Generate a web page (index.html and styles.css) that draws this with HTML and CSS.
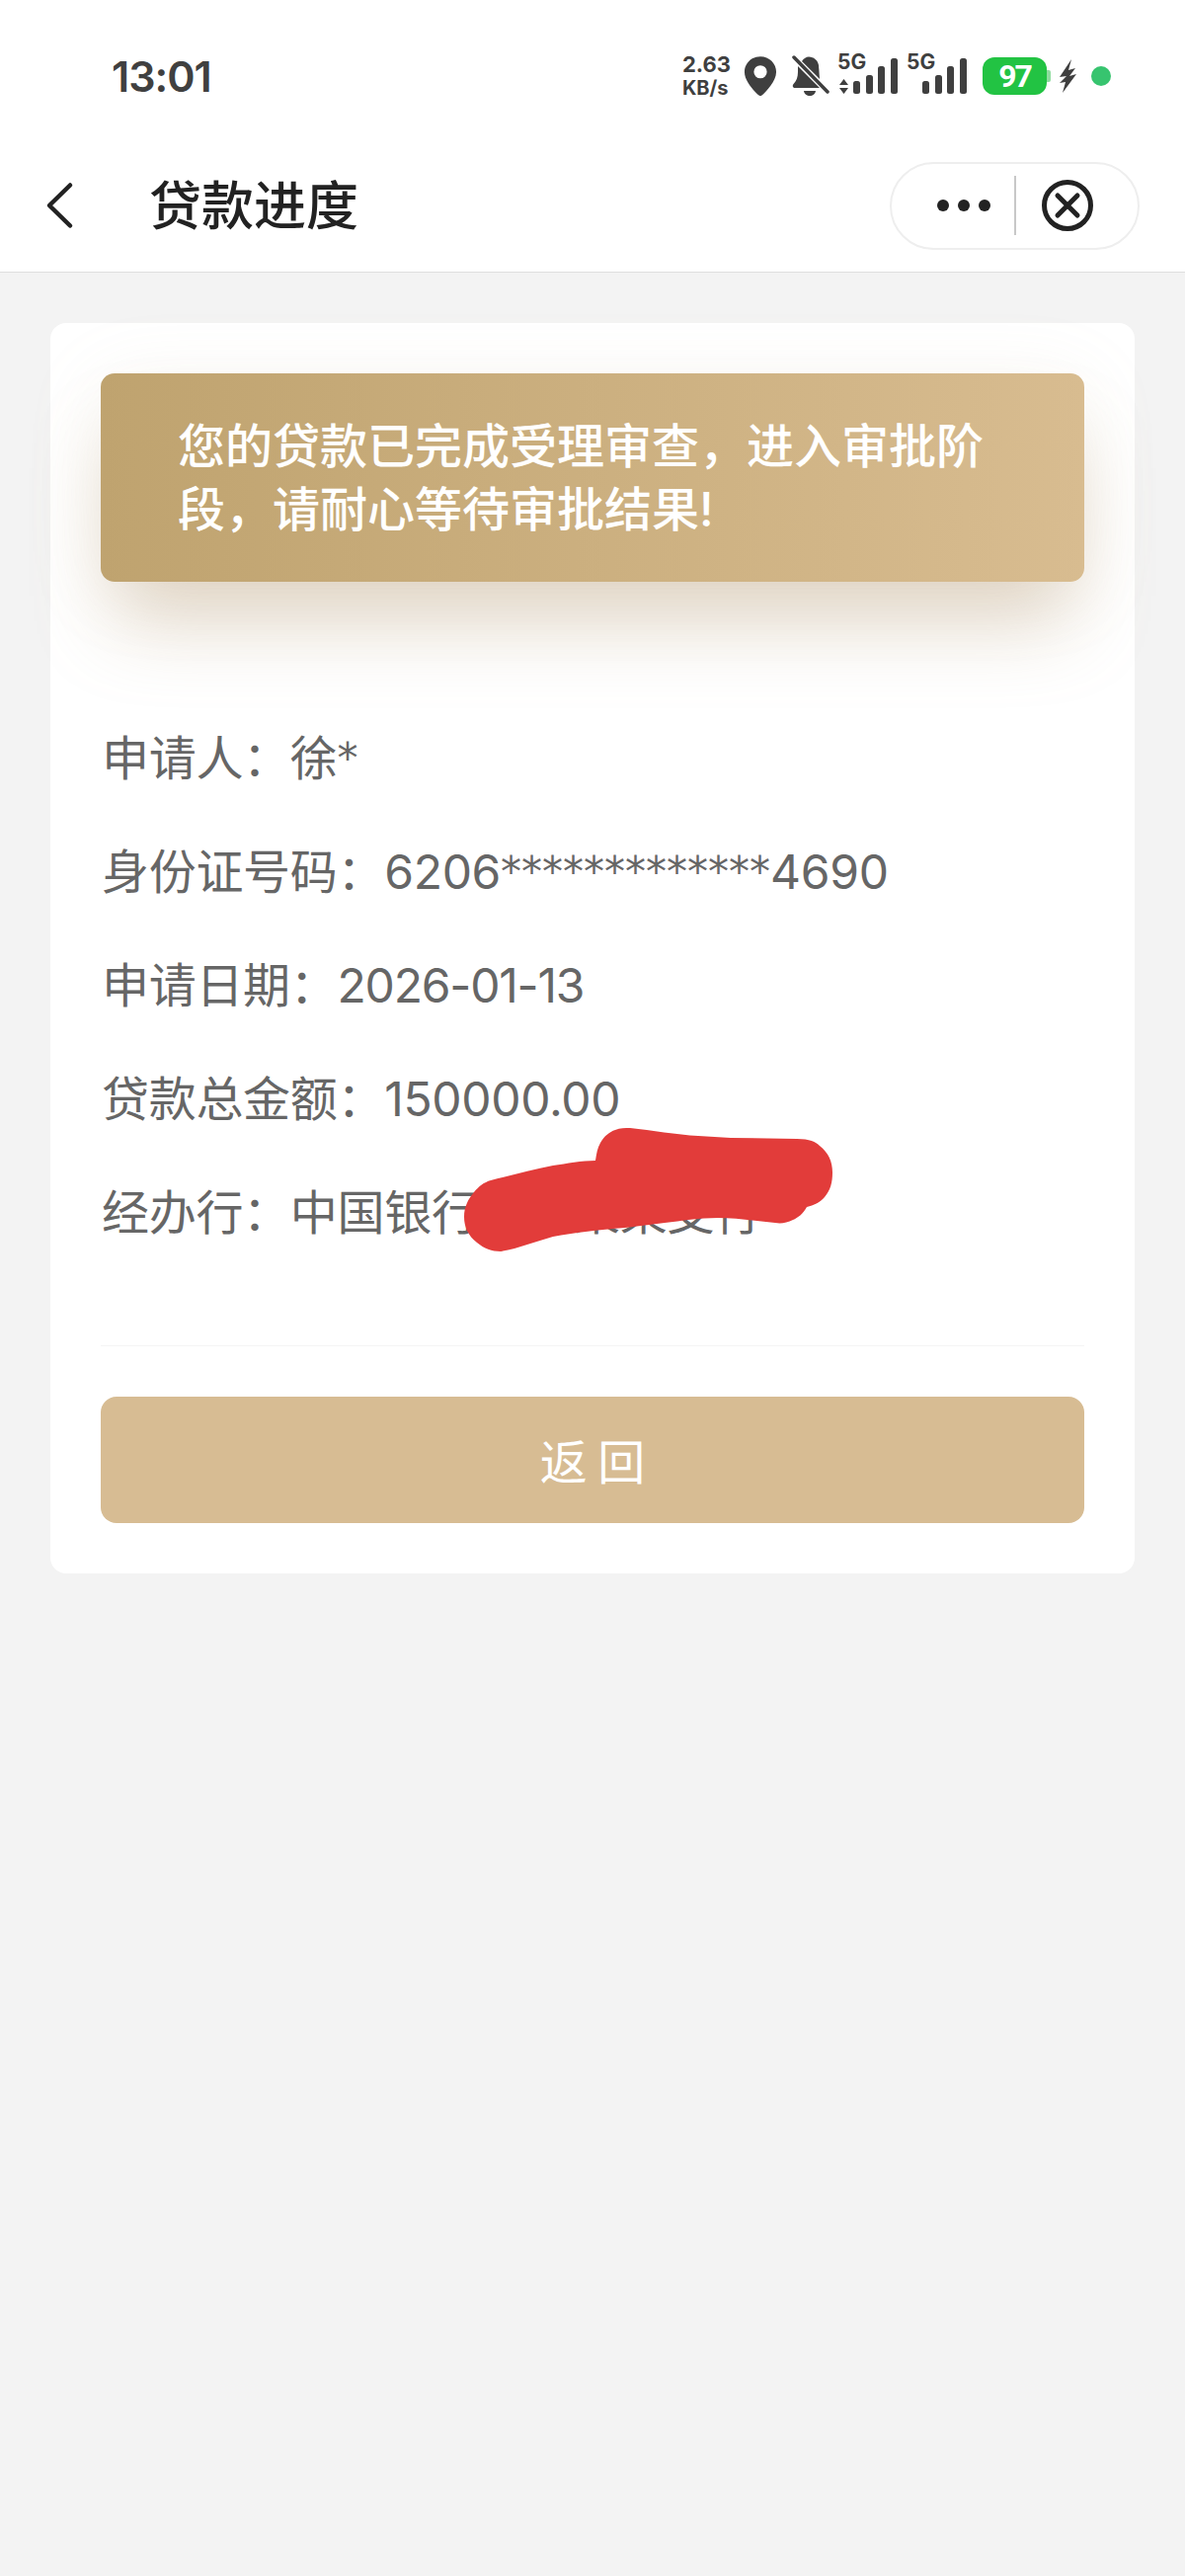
FILE: index.html
```html
<!DOCTYPE html>
<html lang="zh-CN">
<head>
    <meta charset="UTF-8">
    <meta name="viewport" content="width=device-width, initial-scale=1.0">
    <title>贷款进度</title>
    <link rel="stylesheet" href="styles.css">
</head>
<body>

<div class="status-bar">
    <span class="clock">13:01</span>
    <div class="status-icons">
        <div class="speed"><span class="speed-num">2.63</span><span>KB/s</span></div>
        <svg class="icon-pin" width="34" height="42" viewBox="0 0 36 44">
            <path fill-rule="evenodd" fill="#3f3f3f" d="M18 1C8.400 1 1 8.500 1 17.500C1 28 12 38.500 16 42.500C17.200 43.600 18.800 43.600 20 42.500C24 38.500 35 28 35 17.500C35 8.500 27.600 1 18 1ZM18 10.500A7 7 0 1 1 18 24.500A7 7 0 1 1 18 10.500Z"/>
        </svg>
        <svg class="icon-bell" width="38" height="41" viewBox="0 0 38 41">
            <path fill="#3f3f3f" d="M10 6C12 3 14.500 1.500 17 1.500C22 1.500 26 5 27 10L28 24Z"/>
            <path fill="#3f3f3f" d="M6 11L28 33H3C0.500 33 0 30.500 2 28.500C4.500 26 6 22 6 17Z"/>
            <path fill="#3f3f3f" d="M12 36H24C23.500 39.500 21 41 18 41C15 41 12.500 39.500 12 36Z"/>
            <path stroke="#3f3f3f" stroke-width="3.500" stroke-linecap="round" d="M2 2L36 37"/>
        </svg>
        <svg class="icon-signal" width="61" height="44" viewBox="0 0 61 44">
            <text x="0" y="19" class="net-label">5G</text>
            <path fill="#3f3f3f" d="M6.500 29L11 35H2ZM6.500 44L2 38H11Z"/>
            <rect x="16" y="31" width="7" height="13" rx="2.500" fill="#3f3f3f"/>
            <rect x="29" y="25" width="7" height="19" rx="2.500" fill="#3f3f3f"/>
            <rect x="41" y="16" width="7" height="28" rx="2.500" fill="#3f3f3f"/>
            <rect x="54" y="8" width="7" height="36" rx="2.500" fill="#3f3f3f"/>
        </svg>
        <svg class="icon-signal icon-signal-second" width="61" height="44" viewBox="0 0 61 44">
            <text x="0" y="19" class="net-label">5G</text>
            <rect x="16" y="31" width="7" height="13" rx="2.500" fill="#3f3f3f"/>
            <rect x="29" y="25" width="7" height="19" rx="2.500" fill="#3f3f3f"/>
            <rect x="41" y="16" width="7" height="28" rx="2.500" fill="#3f3f3f"/>
            <rect x="54" y="8" width="7" height="36" rx="2.500" fill="#3f3f3f"/>
        </svg>
        <div class="battery"><span class="battery-level">97</span><span class="battery-tip"></span></div>
        <svg class="icon-bolt" width="17" height="34" viewBox="0 0 17 34">
            <path fill="#3f3f3f" d="M12 0L0 18L7 17L0 24L6 23L3 34L17 15L10 17L16 9L9 11Z"/>
        </svg>
        <span class="dot"></span>
    </div>
</div>

<div class="nav-bar">
    <svg class="back" width="30" height="50" viewBox="0 0 30 50">
        <path d="M26 4.500L5 25L26 45.500" fill="none" stroke="#222" stroke-width="4.500" stroke-linecap="round" stroke-linejoin="round"/>
    </svg>
    <h1 class="nav-title">贷款进度</h1>
    <div class="capsule">
        <div class="capsule-dots"><span></span><span></span><span></span></div>
        <span class="capsule-line"></span>
        <svg width="54" height="54" viewBox="0 0 54 54">
            <circle cx="27" cy="27" r="23.500" fill="none" stroke="#222" stroke-width="5"/>
            <path d="M17 17L37 37M37 17L17 37" stroke="#222" stroke-width="5" stroke-linecap="round"/>
        </svg>
    </div>
</div>

<div class="page">
    <div class="card">
        <div class="notice">您的贷款已完成受理审查，进入审批阶段，请耐心等待审批结果!</div>
        <div class="info-list">
            <div class="info-row">申请人：徐<span class="mask">*</span></div>
            <div class="info-row">身份证号码：6206<span class="mask">*************</span>4690</div>
            <div class="info-row">申请日期：<span class="date">2026-01-13</span></div>
            <div class="info-row">贷款总金额：150000.00</div>
            <div class="info-row">经办行：中国银行某某某某支行</div>
        </div>
        <div class="card-footer">
            <button class="back-btn">返 回</button>
        </div>
    </div>
</div>

<svg class="scribble" width="1200" height="1300" viewBox="0 0 1200 1300">
    <path fill="#e23c3a" d="M638 1142C660 1144 685 1149 707 1150L740 1152L807 1153C820 1153 826 1156 830 1160C839 1167 843 1176 843 1187C843 1197 841 1205 835 1212C830 1218 824 1220 817 1222C813 1229 808 1233 803 1235C797 1238 791 1239 785 1238C765 1236 746 1233 727 1233C708 1233 690 1236 673 1238C660 1240 646 1241 633 1243C620 1244 606 1245 593 1247C582 1248 571 1250 560 1252C542 1257 525 1264 507 1267C498 1267 490 1264 483 1258C474 1251 470 1242 470 1232C470 1222 474 1214 480 1207C485 1201 490 1197 497 1195C518 1190 539 1184 560 1180C574 1178 589 1175 603 1175C604 1168 605 1162 608 1157C612 1150 617 1146 623 1144C628 1142 633 1142 638 1142Z"/>
</svg>

</body>
</html>
```

FILE: styles.css
```css
* {
    box-sizing: border-box;
}
body {
    font-family: Inter, "Noto Sans CJK SC", sans-serif;
    background-color: #f3f3f3;
    margin: 0;
    padding: 0;
    position: relative;
    min-height: 2608px;
}
.status-bar {
    height: 155px;
    background-color: #fff;
    display: flex;
    align-items: center;
    justify-content: space-between;
    padding: 0 75px 2px 113px;
}
.clock {
    font-size: 43px;
    font-weight: 600;
    letter-spacing: -1px;
    color: #404040;
}
.status-icons {
    display: flex;
    align-items: center;
}
.speed {
    display: flex;
    flex-direction: column;
    font-size: 20px;
    font-weight: 700;
    line-height: 24px;
    color: #3f3f3f;
    margin-right: 13px;
}
.speed-num {
    font-size: 22px;
}
.icon-pin {
    margin-right: 15px;
}
.icon-bell {
    margin-right: 8px;
}
.icon-signal {
    margin-bottom: 7px;
}
.icon-signal-second {
    margin-left: 9px;
}
.net-label {
    font-size: 21px;
    font-weight: 700;
    fill: #3f3f3f;
}
.battery {
    display: flex;
    align-items: center;
    margin-left: 16px;
    margin-right: 9px;
}
.battery-level {
    width: 65px;
    height: 38px;
    background-color: #22c343;
    border-radius: 12px;
    color: #fff;
    font-family: Roboto, sans-serif;
    font-size: 32px;
    font-weight: 700;
    letter-spacing: -2px;
    line-height: 38px;
    text-align: center;
}
.battery-tip {
    width: 4px;
    height: 12px;
    background-color: #8fdc9f;
    border-radius: 0 2px 2px 0;
}
.dot {
    width: 20px;
    height: 20px;
    border-radius: 50%;
    background-color: #37c46f;
    margin-left: 15px;
}
.nav-bar {
    height: 121px;
    background-color: #fff;
    border-bottom: 1px solid #dedede;
    display: flex;
    align-items: center;
    padding: 0 46px 14px 45px;
}
.back {
    margin-right: 76px;
}
.nav-title {
    margin: 0;
    padding-bottom: 6px;
    font-size: 53px;
    font-weight: 500;
    color: #222;
    flex: 1;
}
.capsule {
    width: 253px;
    height: 89px;
    border: 2px solid #eee;
    border-radius: 45px;
    display: flex;
    align-items: center;
    padding-left: 46px;
}
.capsule-dots {
    display: flex;
    gap: 9px;
}
.capsule-dots span {
    width: 12px;
    height: 12px;
    border-radius: 50%;
    background-color: #222;
}
.capsule-line {
    width: 2px;
    height: 60px;
    background-color: #c8c8c8;
    margin: 0 25px 0 24px;
}
.page {
    padding: 51px 51px 0;
}
.card {
    background-color: #fff;
    border-radius: 16px;
    padding: 51px 51px 51px;
}
.notice {
    height: 211px;
    border-radius: 14px;
    background: linear-gradient(90deg, #bfa36f, #d8bc90);
    box-shadow: 0 55px 80px -15px rgba(180, 150, 110, 0.38), 0 10px 80px rgba(200, 180, 150, 0.12);
    color: #fff;
    font-size: 48px;
    font-weight: 500;
    line-height: 64px;
    padding: 42px 100px 0 78px;
}
.info-list {
    padding-top: 121px;
    height: 774px;
    border-bottom: 1px solid #f4f4f4;
}
.info-row {
    font-size: 48px;
    line-height: 115px;
    color: #666;
    white-space: nowrap;
    margin-left: 1px;
    letter-spacing: -0.3px;
}
.mask {
    font-family: "DejaVu Sans", sans-serif;
    font-size: 42px;
    vertical-align: 3px;
    letter-spacing: 0;
}
.date {
    letter-spacing: -1.2px;
}
.card-footer {
    padding-top: 51px;
}
.back-btn {
    display: block;
    width: 100%;
    height: 128px;
    border: none;
    border-radius: 16px;
    background-color: #d7bc93;
    color: #fff;
    font-family: inherit;
    font-size: 48px;
    word-spacing: -3px;
    padding: 0 0 2px;
}
.scribble {
    position: absolute;
    left: 0;
    top: 0;
    pointer-events: none;
}
```
